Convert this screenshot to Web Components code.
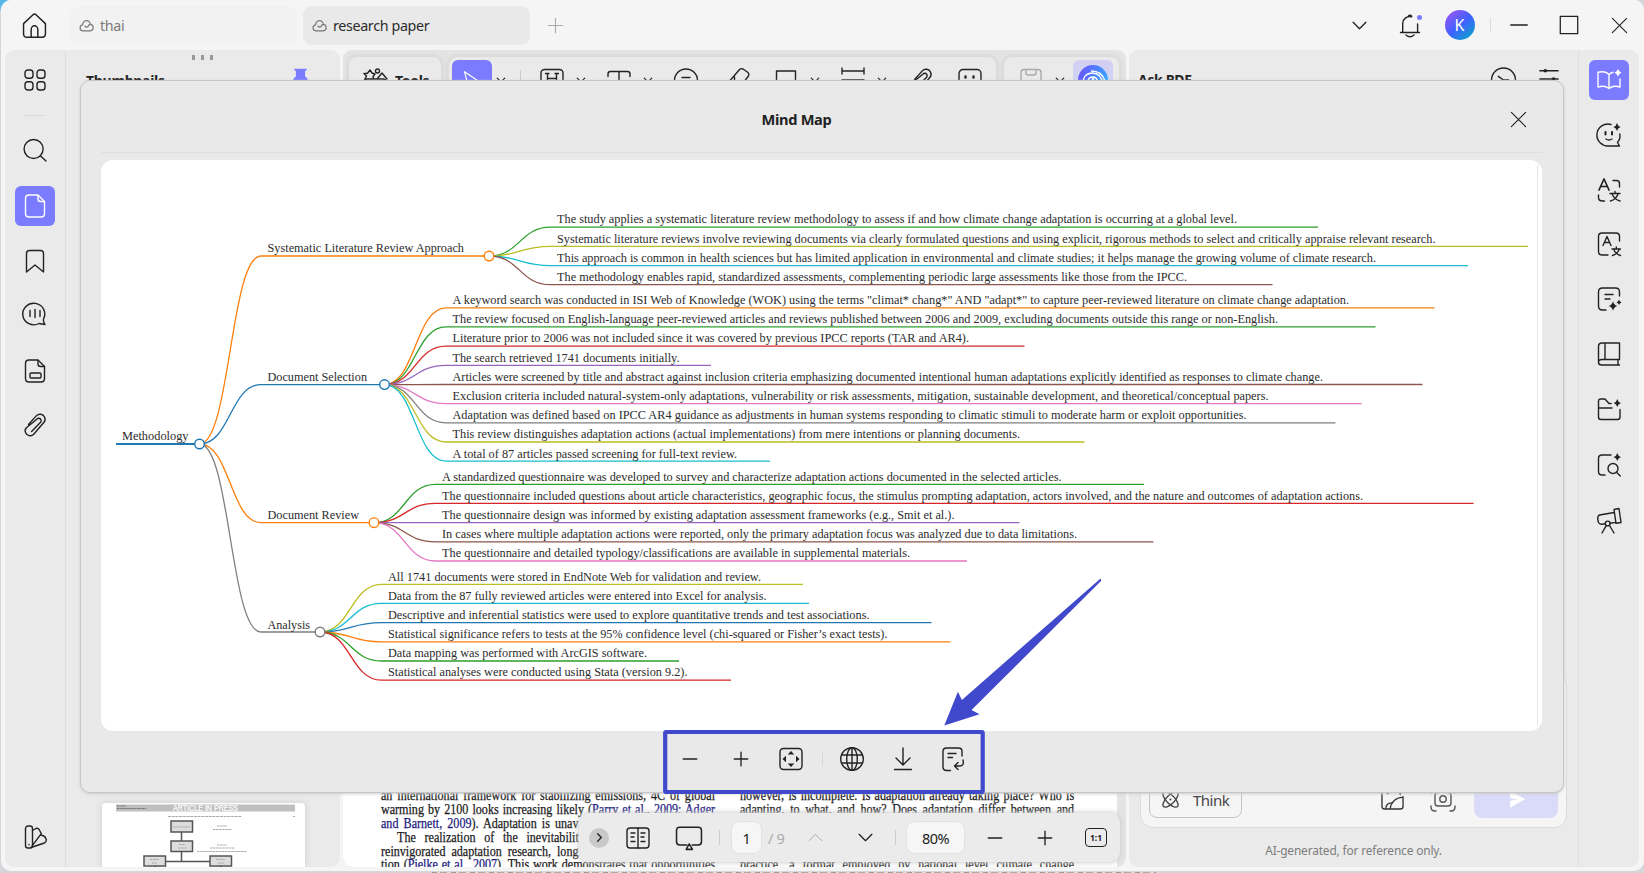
<!DOCTYPE html>
<html lang="en">
<head>
<meta charset="utf-8">
<title>research paper</title>
<style>
  html, body { margin: 0; height: 100%; overflow: hidden; }
  body {
    background: linear-gradient(135deg, #55b8e6 0 5px, #d6d7db 9px);
    font-family: "Noto Sans", "Open Sans", sans-serif;
    font-size: 14px;
    color: #222;
  }
</style>
</head>
<body>
<pdf-app></pdf-app>

<script>
const ICONS = {
  home: '<path d="M1.5 10.2 10.6 1.6q1.4-1.2 2.8 0l9.1 8.6V20q0 3.3-3.3 3.3H4.8q-3.3 0-3.3-3.3z"/><path d="M8.8 23v-7a3.2 3.7 0 0 1 6.4 0v7"/>',
  cloud: '<path d="M6 20.5a4.8 4.8 0 0 1-.3-9.5 6.3 6.3 0 1 1 12.6-.8 5.2 5.2 0 0 1-.3 10.3z"/><path d="M9.5 13a3 3 0 0 0 5.3 0q1.2-2.600 3.500-2.800"/>',
  plus: '<path d="M12 3v18M3 12h18"/>',
  minus: '<path d="M3 12h18"/>',
  down: '<path d="m3 7.500 9 9 9-9"/>',
  up: '<path d="m3 16.500 9-9 9 9"/>',
  right: '<path d="m8 4 8 8-8 8"/>',
  bell: '<path d="M2.500 19.500h19M4.700 19V10.500a7.200 7.200 0 0 1 9-6.800M19.600 11v8M10.500 3a1.800 1.800 0 0 1 3 0M8 22q4 3.400 8 0"/>',
  max: '<path d="M2.500 2.500h19v19h-19z"/>',
  close: '<path d="m3 3 18 18M21 3 3 21"/>',
  grid: '<rect x="2" y="2" width="8" height="8.300" rx="2.800"/><rect x="14" y="2" width="8" height="8.300" rx="2.800"/><rect x="2" y="13.700" width="8" height="8.300" rx="2.800"/><rect x="14" y="13.700" width="8" height="8.300" rx="2.800"/>',
  search: '<circle cx="10.600" cy="11" r="9.500"/><path d="m17.500 18 5.500 5"/>',
  file: '<path d="M6 1h9l6.500 6.500V19.500q0 3.500-3.500 3.500H6q-3.500 0-3.500-3.500v-15Q2.500 1 6 1z"/><path d="M15 1.500V5q0 2.500 2.500 2.500h4"/>',
  bookmark: '<path d="M3.500 23V4.500q0-3 3-3h11q3 0 3 3V23L12 16z"/>',
  comment: '<path d="M20.500 17A11 10.800 0 1 0 16 21.500l6 1-1.500-3z"/><path d="M7 8.500v6M12 7.500v8M17 8.500v6"/>',
  field: '<path d="M6 1h9l6.500 6.500V19.500q0 3.500-3.500 3.500H6q-3.500 0-3.500-3.500v-15Q2.500 1 6 1z"/><path d="M15 1.500V5q0 2.500 2.500 2.500h4"/><rect x="7" y="14" width="11" height="5" rx="1"/>',
  clip: '<path d="M5.500 11.500 13.300 2.900a5 5 0 0 1 8.300 1.300 5 5 0 0 1-.8 5.300L10.700 21.300a5 5 0 0 1-8.200-1.800 4.500 4.500 0 0 1 .9-4.800L13.800 6.300a2.500 2.500 0 0 1 4 0 2.500 2.500 0 0 1-.2 2.900L8.600 18.500"/>',
  palette: '<rect x="2.500" y="1" width="7" height="22" rx="2.500"/><path d="M9.500 5.500 13 3.500q2-.8 3.300 1.200l2 4-9 12"/><path d="m18 10 2.800 1q1.800.8 2.500 3.700 0 2.500-2 3.300L8 22.500M6 19.500v.3"/>',
  aibook: '<path d="M12 6.500Q8.500 2.800 1 4.200V19q7-2 11 1.500 4-3.500 11-1.500v-8M12 6.500V20M12 6.500q1.500-1.800 4-2.300"/><path class="f" d="M21 .8q.6 3 3.500 4-2.900 1-3.500 4-.6-3-3.500-4 2.900-1 3.500-4z"/>',
  aichat: '<path d="M14 1.500A11 11 0 1 0 12 23h10.500l-2-3.500a10 10 0 0 0 2.300-8.500"/><path d="M8.500 9v2.500M15 9v2.500" stroke-width="2"/><path d="M9 16q3 2 6 0"/><path class="f" d="M20 0q.7 3.200 3.600 4-2.900.8-3.600 4-.7-3.200-3.600-4 2.900-.8 3.600-4z"/>',
  translate: '<path d="M2 12 7 1l5 11M3.800 8.500h6.400" stroke-width="1.700"/><path d="M16 2.500h3.500q3 0 3 3V9M1.500 17v2.500q0 3.500 4 3.500h2M13 15.500h10M18 13.500v2M21 16q-2 5.500-7.500 7M15 16q2.500 5.500 8 7"/>',
  translate2: '<path d="M22.500 9V4.500Q22.500 1 19 1H5Q1.500 1 1.500 4.500v15Q1.500 23 5 23h6"/><path d="m6 13.500 4-9 4 9M7.500 10.500h5.200M15 17h8.500M19.300 15v2M22.200 17.500q-2 4.500-6.700 6M16.700 17.500q2 4.500 6.800 6"/>',
  ainote: '<path d="M22.500 9V5q0-4-4-4h-13q-4 0-4 4v14q0 4 4 4H9M8 7.500h8M8 12h5"/><path class="f" d="M16 14q.8 4.200 4.500 5-3.700.8-4.500 5-.8-4.200-4.500-5 3.700-.8 4.500-5zM22 12.500q.5 2 2.500 3-2 .5-2.500 2.500-.5-2-2.500-2.500 2-1 2.500-3z"/>',
  book: '<path d="M5 1h17.500v16.500H5q-3.500 0-3.500 3Q1.500 23 5 23h17.500M1.500 20V4.500Q1.500 1 5 1M8 1v16.500M21 17.500V23"/>',
  aifolder: '<path d="M1.500 11V4.500Q1.500 2 4 2h4l4 4.500h2M1.500 11v9q0 2.500 2.500 2.500h16.500Q23 22.500 23 20V12.500M1.500 11H15"/><path class="f" d="M20.300 2q.7 3.200 3.700 4-3 .8-3.700 4-.7-3.200-3.700-4 3-.8 3.700-4z"/>',
  aisearch: '<path d="M14 2H5Q1.500 2 1.500 5.500v13Q1.500 22 5 22h3"/><circle cx="16" cy="15.500" r="5"/><path d="m19.700 19.500 3.600 3.500"/><path class="f" d="M20.300 0q.7 3.200 3.700 4-3 .8-3.700 4-.7-3.200-3.700-4 3-.8 3.700-4z"/>',
  telescope: '<path d="m17 1.500 5-1 2 14-5 .8zM17.200 4.500 2.500 7Q.5 8 .700 11l.8 3.500q1 2 3.500 1.700l3.200-.5M13.300 15.200l5.200-.8M9.200 17.700 5 25M12.500 17.500l4.500 7.500"/><circle cx="10.700" cy="15.500" r="2.400"/>',
  tools: '<path d="M1 14q0-3 3-3h16q3 0 3 3v9H1zM2 11l1.500-3L1 5.500l3.500-.3L7 2l2 3 3 1-2 2.500.5 2M14 11l5-6 5 6"/><circle cx="14.500" cy="3" r="2"/>',
  cursor: '<path d="m3 2 5 19 4-6.500 8-1z"/>',
  highlight: '<rect x="1" y="1.500" width="22" height="21" rx="3.500"/><path d="M5.500 5.500h3.500M7.500 6v12M15 5.500h3.500M16.500 6v12M7.500 10.500h9"/>',
  text: '<path d="M1 8.500V6q0-2.500 2.500-2.500h17q2.500 0 2.500 2.500v2.500M12 3.500V22"/>',
  strike: '<circle cx="12" cy="12.500" r="11.500"/><path d="M8 9.500h8"/>',
  pen: '<path d="M8 8 13.500 1.500q1.500-1.500 3.500-.5l5 3.500q1.500 1.500.5 3.500L17 15l-5 5M8 8 3.500 13l1 6 8 1M3.500 13h4q2-2 .5-5"/>',
  rect: '<path d="M2.500 3h19v19h-19z"/>',
  measure: '<path d="M1 0v6M23 0v6M1 3h22M1 12h22v9H1zM5 12v3M9 12v3M13 12v3M17 12v3"/>',
  sticker: '<rect x="1" y="1.500" width="22" height="21" rx="4"/><path d="M7.500 8.500v1M15.500 8.500v1" stroke-width="2.400"/>',
  save: '<path d="M5 1.500h14q3 0 3 3V20q0 2.500-2.500 2.500h-15Q2 22.500 2 20V4.500q0-3 3-3zM7 2v3q0 2 2 2h6q2 0 2-2V2M9 14q3-3 6 0"/>',
  clock: '<circle cx="12" cy="12.500" r="11.500"/><path d="m7 9 5 3.500h5"/>',
  sliders: '<path d="M2 3h20M2 12h20M2 21h20"/><circle class="f" cx="8" cy="3" r="2"/><circle class="f" cx="17" cy="12" r="2"/>',
  fit: '<rect x="1" y="1.500" width="22" height="21" rx="3.500"/><path class="f" d="m12 4 3.300 3.500H8.700zM12 20l3.300-3.500H8.700zM3.500 12 7 8.700v6.600zM20.500 12 17 8.700v6.600z"/>',
  globe: '<circle cx="12" cy="12" r="11.300"/><ellipse cx="12" cy="12" rx="5.300" ry="11.300"/><path d="M12 .7v22.600M2 8h20M2 16h20"/>',
  download: '<path d="M12 1v16.500M5 11l7 7 7-7M3.500 22.500h17"/>',
  export: '<path d="M21 9V4.500q0-3.500-3.500-3.500h-12Q2 1 2 4.500v15Q2 23.500 5.500 23.500h4M7 6.500h8M7 10.500h4.500M22 13q1.500 6-3.500 6h-5M17 15.500 13.500 19l3.500 3.500"/>',
  twopage: '<rect x="1" y="2" width="22" height="20" rx="3"/><path d="M12 2v20M5 7h4M5 11h3M5 15.500h4M15 7h4M15 11h3M15 15.500h4"/>',
  present: '<path d="M10 18.500H3.500Q.5 18.500 .5 15.500V5q0-3 3-3h17q3 0 3 3v10.500q0 3-3 3H15"/><path d="m12.200 17.500 3 5H9.400z"/>',
  atom: '<ellipse cx="12" cy="12" rx="5.200" ry="12.500" transform="rotate(45 12 12)"/><ellipse cx="12" cy="12" rx="5.200" ry="12.500" transform="rotate(-45 12 12)"/><circle class="f" cx="12" cy="12" r="1.300"/>',
  image: '<path d="M14 1H4Q1 1 1 4v16q0 3 3 3h16q3 0 3-3V10M9.500 23Q11 11.500 23 10.500M5 23q0-6.500 6-6.500"/><circle class="f" cx="7" cy="6.500" r="1.200"/><path class="f" d="M20 1q.7 3.400 3.700 4-3 .7-3.700 4-.7-3.300-3.700-4 3-.6 3.700-4z"/>',
  camera: '<path d="M0 6V4q0-4 4-4M20 0q4 0 4 4v2M0 19v1q0 4 4 4h1M24 19v1q0 4-4 4h-1M7 5.500h1.500l1-1.500h5l1 1.500H17q3 0 3 3V16q0 3-3 3H7q-3 0-3-3V8.500q0-3 3-3z"/><circle cx="12" cy="12" r="3.200"/>',
  send: '<path class="f" d="M4 1.500 23 11.500 4 22.500V13.500l9-1.500-9-1.500z"/>',
  pin: '<path class="f" d="M3.500 1h17v3h-2v8q4 2 4 6h-21q0-4 4-6V4h-2z"/>'
};

class BaseElement extends HTMLElement {
  connectedCallback() {
    this.attachShadow({ mode: 'open' }).innerHTML = this.render();
  }
}

class UiIcon extends BaseElement {
  render() {
    const size = this.getAttribute('size') || 24;
    const weight = this.getAttribute('weight') || 1.4;
    return `
      <style>
        :host { display: block; flex: none; width: ${size}px; height: ${size}px; }
        svg { display: block; width: 100%; height: 100%; overflow: visible; fill: none; stroke: currentColor; stroke-width: ${weight}; stroke-linecap: round; stroke-linejoin: round; }
        .f { fill: currentColor; stroke: none; }
      </style>
      <svg viewBox="0 0 24 24">${ICONS[this.getAttribute('name')]}</svg>
    `;
  }
}

class DocTab extends BaseElement {
  render() {
    return `
      <style>
        :host { display: flex; align-items: center; gap: 6px; width: 218px; height: 39px; padding-left: 9px; border-radius: 9px; background: #f2f2f2; color: #7a7a7a; font-size: 14.3px; letter-spacing: -.35px; }
        :host([active]) { background: #e9e9e9; color: #2c2c2c; }
        ui-icon { color: #777; }
      </style>
      <ui-icon name="cloud" size="15" weight="1.900"></ui-icon><span><slot></slot></span>
    `;
  }
}

class TitleBar extends BaseElement {
  render() {
    return `
      <style>
        :host { display: flex; align-items: center; height: 50px; box-sizing: border-box; padding-left: 21px; background: #f5f5f5; }
        .spacer { flex: 1; }
        .bell { position: relative; margin-left: 30px; }
        .bell i { position: absolute; right: 0; top: 2px; width: 5px; height: 5px; border-radius: 50%; background: #7b7bff; }
        .avatar { width: 30px; height: 30px; margin: 0 15px 0 23px; border-radius: 50%; background: linear-gradient(140deg, #9b58f5 8%, #4061ff 50%, #08a8c6 95%); color: #fff; display: flex; align-items: center; justify-content: center; font-size: 16px; }
        .sep { width: 1px; height: 15px; background: #ddd; }
      </style>
      <ui-icon name="home" size="25"></ui-icon>
      <doc-tab style="margin-left:23px">thai</doc-tab>
      <doc-tab active style="margin-left:6px">research paper</doc-tab>
      <ui-icon name="plus" size="19" style="margin-left:16px;color:#aaa"></ui-icon>
      <span class="spacer"></span>
      <ui-icon name="down" size="17" weight="1.900"></ui-icon>
      <span class="bell"><ui-icon name="bell" size="24"></ui-icon><i></i></span>
      <span class="avatar">K</span>
      <span class="sep"></span>
      <ui-icon name="minus" size="22" style="margin-left:17px"></ui-icon>
      <ui-icon name="max" size="22" style="margin-left:28px"></ui-icon>
      <ui-icon name="close" size="19" style="margin:0 15.500px 0 30px"></ui-icon>
    `;
  }
}

/* Vertical strip of icon buttons; "items" is a list of name:gap pairs, the gap being the space above. */
class SideRail extends BaseElement {
  render() {
    const active = this.getAttribute('active');
    const items = this.getAttribute('items').split(' ').map(item => {
      const [name, gap] = item.split(':');
      if (name === 'sep') return `<span class="sep" style="margin-top:${gap}px"></span>`;
      return `<span class="btn${name === active ? ' active' : ''}" style="margin-top:${gap === 'auto' ? 'auto' : gap + 'px'}"><ui-icon name="${name}" size="24"></ui-icon></span>`;
    }).join('');
    return `
      <style>
        :host { display: flex; flex-direction: column; align-items: center; width: 60px; flex: none; padding-bottom: 10px; box-sizing: border-box; }
        .btn { width: 40px; height: 40px; flex: none; display: flex; align-items: center; justify-content: center; border-radius: 6px; }
        .active { background: #7b7bff; color: #fff; }
        .sep { width: 22px; height: 1px; flex: none; background: #dadada; }
      </style>
      ${items}
    `;
  }
}

class ThumbPanel extends BaseElement {
  render() {
    return `
      <style>
        :host { display: flex; flex-direction: column; flex: 1; border-left: 1px solid #dedede; }
        .dots { display: flex; justify-content: center; gap: 6px; padding: 5px 2px 0 0; }
        .dots i { width: 3px; height: 5px; background: #999; }
        header { display: flex; justify-content: space-between; padding: 8px 31px 0 20px; font-size: 14px; font-weight: 700; line-height: 25px; letter-spacing: -.3px; }
        header ui-icon { color: #7b7bff; }
        .thumb { width: 203px; height: 64px; margin: auto 0 0 36px; background: #fff; border-radius: 4px 4px 0 0; box-shadow: 0 0 6px #ccc; }
        svg { display: block; }
      </style>
      <div class="dots"><i></i><i></i><i></i></div>
      <header><span>Thumbnails</span><ui-icon name="pin" size="17"></ui-icon></header>
      <div class="thumb">
        <svg width="203" height="64" viewBox="102 803 203 64">
          <rect x="116" y="804.500" width="179" height="7" fill="#bfbfbf"/>
          <text x="173" y="811" font-family="Liberation Sans" font-size="8.500" fill="#fff" stroke="#fff" stroke-width=".2" textLength="65" lengthAdjust="spacingAndGlyphs">ARTICLE IN PRESS</text>
          <path d="M117 806h9M117 808.500h29" stroke="#777" stroke-dasharray="2 .5"/>
          <path d="M168 816.500h74M293 816.500h2" stroke="#aaa" stroke-dasharray="3 .7"/>
          <g stroke="#555" stroke-width="1.500" fill="#ddd"><path d="M181.500 832v9M181.500 852v9M155 861.500h65M155 861v6M221 861v6"/>
          <rect x="171" y="821" width="21.500" height="11"/><rect x="171" y="841" width="21.500" height="10.500"/><rect x="144" y="856" width="21.500" height="10"/><rect x="210" y="856" width="21.500" height="10"/></g>
          <g stroke="#aaa" stroke-dasharray="2.500 .6"><path d="M173 827h17M179 844.500h6M178 848h9M150 859.500h9M152 863h5M216 859.500h9M218 863h6M217 826h10M213 829.500h19M217 845h10M210 848h25M197 851.500h50"/></g>
        </svg>
      </div>
    `;
  }
}

class ToolStrip extends BaseElement {
  render() {
    return `
      <style>
        :host { display: flex; gap: 6px; padding: 6px 6px 0 5px; background: #e4e4e4; border-radius: 9px 9px 0 0; height: 54px; box-sizing: border-box; flex: none; }
        .group { display: flex; align-items: center; box-sizing: border-box; height: 48px; background: #eaeaea; border: 1px solid #dcdcdc; border-radius: 9px; box-shadow: 0 0 5px #d0d0d0; }
        b { margin-left: 8px; font-size: 14px; line-height: 20px; padding-top: 2px; letter-spacing: -.3px; }
        .sel, .ai { width: 40px; height: 40px; border-radius: 6px; background: #7b7bff; color: #fff; display: flex; align-items: center; justify-content: center; }
        .ai { background: linear-gradient(#d4cef3, #c9def3); }
        .ai span { width: 30px; height: 30px; border-radius: 50%; background: linear-gradient(110deg, #655dff 15%, #35a7ff 85%); }
        .sep { width: 1px; height: 20px; background: #ccc; }
      </style>
      <div class="group" style="width:94px">
        <ui-icon name="tools" size="24" style="margin-left:14px"></ui-icon><b>Tools</b>
      </div>
      <div class="group" style="width:550px">
        <span class="sel" style="margin-left:3px"><ui-icon name="cursor" size="20"></ui-icon></span>
        <ui-icon name="down" size="10" weight="3" style="margin-left:4px"></ui-icon>
        <span class="sep" style="margin-left:14px"></span>
        <ui-icon name="highlight" style="margin-left:19px"></ui-icon>
        <ui-icon name="down" size="10" weight="3" style="margin-left:12px"></ui-icon>
        <ui-icon name="text" style="margin-left:21px"></ui-icon>
        <ui-icon name="down" size="10" weight="3" style="margin-left:12px"></ui-icon>
        <ui-icon name="strike" style="margin-left:21px"></ui-icon>
        <ui-icon name="pen" style="margin-left:28px"></ui-icon>
        <ui-icon name="rect" style="margin-left:24px"></ui-icon>
        <ui-icon name="down" size="10" weight="3" style="margin-left:12px"></ui-icon>
        <ui-icon name="measure" style="margin-left:21px"></ui-icon>
        <ui-icon name="down" size="10" weight="3" style="margin-left:12px"></ui-icon>
        <ui-icon name="clip" style="margin-left:22px"></ui-icon>
        <ui-icon name="sticker" style="margin-left:25px"></ui-icon>
      </div>
      <div class="group" style="width:117px">
        <ui-icon name="save" style="margin-left:15px;color:#aaa"></ui-icon>
        <ui-icon name="down" size="10" weight="3" style="margin-left:12px"></ui-icon>
        <span class="ai" style="margin-left:8px"><span>
          <svg width="30" height="30" viewBox="0 0 30 30" fill="none" stroke="#fff" stroke-width="1.300"><path d="M6 22Q3 9 14 8q9 0 11 11M10 23Q8 12 15 12q6 0 5 12M13 6q11 0 14 10"/><path d="m15 13 1 3 3 1-3 1-1 3-1-3-3-1 3-1z" fill="#fff"/></svg>
        </span></span>
      </div>
    `;
  }
}

class DocPage extends BaseElement {
  render() {
    return `
      <style>
        :host { display: flex; align-items: flex-end; gap: 24px; flex: 1; background: #fff; margin-right: 9px; padding: 0 0 0 38px; overflow: hidden; border-radius: 0 0 0 9px; }
        .col { width: 335px; height: 78px; font: 13.900px/14px "Liberation Serif", serif; color: #1c1c1c; -webkit-text-stroke: .25px currentColor; }
        p { margin: 0; width: 384px; transform: scaleX(.87); transform-origin: 0 0; white-space: nowrap; text-align: justify; text-align-last: justify; height: 13.900px; }
        a { color: #1b1b80; }
      </style>
      <div class="col">
        <p>an international framework for stabilizing emissions, 4C of global</p>
        <p>warming by 2100 looks increasing likely (<a>Parry et al., 2009; Adger</a></p>
        <p style="width:227px"><a>and Barnett, 2009</a>). Adaptation is unav</p>
        <p style="width:209px;margin-left:16px">The realization of the inevitabilit</p>
        <p style="width:227px">reinvigorated adaptation research, long</p>
        <p>tion (<a>Pielke et al., 2007</a>). This work demonstrates that opportunities</p>
      </div>
      <div class="col">
        <p>however, is incomplete. Is adaptation already taking place? Who is</p>
        <p style="margin-bottom:41.700px">adapting, to what, and how? Does adaptation differ between and</p>
        <p>practice, a format employed by national level climate change</p>
      </div>
    `;
  }
}

class PageBar extends BaseElement {
  render() {
    return `
      <style>
        :host { position: absolute; left: 236px; bottom: 5px; width: 541px; height: 49px; display: flex; align-items: center; background: #ebebeb; border-radius: 10px; box-shadow: 0 0 5px 1px #cfcfcf; }
        .round { width: 20px; height: 20px; margin-left: 10px; border-radius: 50%; background: #c9c9c9; display: flex; align-items: center; justify-content: center; }
        .sep { width: 1px; height: 15px; background: #ccc; }
        .box { height: 33px; box-sizing: border-box; display: flex; align-items: center; justify-content: center; background: #f6f6f6; border: 1px solid #e2e2e2; border-radius: 8px; font-size: 14.500px; letter-spacing: -.5px; }
        .total { width: 17px; margin-left: 6px; color: #aaa; font-size: 14.500px; white-space: nowrap; letter-spacing: -.3px; }
        .ratio { width: 22px; height: 19px; box-sizing: border-box; border: 1.500px solid #222; border-radius: 4px; font-size: 8.500px; font-weight: 700; display: flex; align-items: center; justify-content: center; margin-left: 31px; }
      </style>
      <span class="round"><ui-icon name="right" size="11" weight="3"></ui-icon></span>
      <ui-icon name="twopage" style="margin-left:17px"></ui-icon>
      <ui-icon name="present" size="26" style="margin-left:26px"></ui-icon>
      <span class="sep" style="margin-left:17px"></span>
      <span class="box" style="width:31px;margin-left:11px">1</span>
      <span class="total">/ 9</span>
      <ui-icon name="up" size="17" style="margin-left:21.500px;color:#aaa"></ui-icon>
      <ui-icon name="down" size="17" weight="1.800" style="margin-left:33px"></ui-icon>
      <span class="sep" style="margin-left:21px"></span>
      <span class="box" style="width:59px;margin-left:10.500px">80%</span>
      <ui-icon name="minus" size="18" style="margin-left:21px" weight="1.800"></ui-icon>
      <ui-icon name="plus" size="18" style="margin-left:32px" weight="1.800"></ui-icon>
      <span class="ratio">1:1</span>
    `;
  }
}

class DocViewer extends BaseElement {
  render() {
    return `
      <style>
        :host { display: flex; flex-direction: column; width: 783px; flex: none; position: relative; background: #e4e4e4; border-radius: 9px; overflow: hidden; }
      </style>
      <tool-strip></tool-strip>
      <doc-page></doc-page>
      <page-bar></page-bar>
    `;
  }
}

class AskPanel extends BaseElement {
  render() {
    return `
      <style>
        :host { display: flex; flex-direction: column; flex: 1; border-right: 1px solid #dfdfdf; }
        header { display: flex; align-items: flex-start; height: 45px; padding: 13px 18px 0 9px; font-size: 14px; font-weight: 700; line-height: 33px; letter-spacing: -.3px; }
        header ui-icon:first-of-type { margin: 4px 22px 0 auto; }
        header ui-icon:last-of-type { margin-top: 5px; }
        .card { display: flex; align-items: flex-end; height: 155px; margin: auto 11px 0; box-sizing: border-box; padding: 0 8px 9px; background: #f5f5f5; border: 1px solid #dcdcdc; border-radius: 13px; }
        .think { display: flex; align-items: center; box-sizing: border-box; width: 93px; height: 37px; padding-left: 11px; border: 1px solid #c4c4c4; border-radius: 8px; font-size: 15px; letter-spacing: -.5px; color: #444; gap: 13px; }
        .send { display: flex; align-items: center; justify-content: center; width: 84px; height: 38px; margin-left: 19px; border-radius: 8px; background: #dadbf8; color: #fff; }
        .note { margin: 14px 0 9px; text-align: center; font-size: 11.900px; line-height: 16px; letter-spacing: -.15px; color: #7c7c7c; }
      </style>
      <header>Ask PDF<ui-icon name="clock" size="25"></ui-icon><ui-icon name="sliders" size="22"></ui-icon></header>
      <div class="card">
        <span class="think"><ui-icon name="atom" size="19" weight="1.700"></ui-icon>Think</span>
        <ui-icon name="image" size="23" style="margin:0 0 8px auto;color:#333"></ui-icon>
        <ui-icon name="camera" size="24" style="margin:0 0 7px 27px;color:#555"></ui-icon>
        <span class="send"><ui-icon name="send" size="19"></ui-icon></span>
      </div>
      <div class="note">AI-generated, for reference only.</div>
    `;
  }
}

const COLORS = { blue: '#1f77b4', orange: '#ff7f0e', green: '#2ca02c', red: '#d62728', purple: '#9467bd', brown: '#8c564b', pink: '#e377c2', gray: '#7f7f7f', olive: '#bcbd22', cyan: '#17becf' };

/* Leaves: [colour, text, end of text, end of underline, baseline]; y is the first underline. */
const BRANCHES = [
  { text: 'Systematic Literature Review Approach', end: 464, cx: 489, cy: 256, base: 252, color: 'orange', y: 227.2, leaves: [
    ['green', 'The study applies a systematic literature review methodology to assess if and how climate change adaptation is occurring at a global level.', 1237, 1318, 223],
    ['olive', 'Systematic literature reviews involve reviewing documents via clearly formulated questions and using explicit, rigorous methods to select and critically appraise relevant research.', 1435.5, 1528, 243],
    ['cyan', 'This approach is common in health sciences but has limited application in environmental and climate studies; it helps manage the growing volume of climate research.', 1376, 1468, 262],
    ['brown', 'The methodology enables rapid, standardized assessments, complementing periodic large assessments like those from the IPCC.', 1187, 1272.5, 281]
  ] },
  { text: 'Document Selection', end: 367, cx: 384.5, cy: 384.6, base: 381, color: 'blue', y: 307.8, leaves: [
    ['orange', 'A keyword search was conducted in ISI Web of Knowledge (WOK) using the terms "climat* chang*" AND "adapt*" to capture peer-reviewed literature on climate change adaptation.', 1349, 1434.5, 304],
    ['green', 'The review focused on English-language peer-reviewed articles and reviews published between 2006 and 2009, excluding documents outside this range or non-English.', 1278, 1375.5, 323],
    ['red', 'Literature prior to 2006 was not included since it was covered by previous IPCC reports (TAR and AR4).', 969, 1024.5, 342],
    ['purple', 'The search retrieved 1741 documents initially.', 679.5, 711, 362],
    ['brown', 'Articles were screened by title and abstract against inclusion criteria emphasizing documented intentional human adaptations explicitly identified as responses to climate change.', 1323, 1422.5, 381],
    ['pink', 'Exclusion criteria included natural-system-only adaptations, vulnerability or risk assessments, mitigation, sustainable development, and theoretical/conceptual papers.', 1268.5, 1361.5, 400],
    ['gray', 'Adaptation was defined based on IPCC AR4 guidance as adjustments in human systems responding to climatic stimuli to moderate harm or exploit opportunities.', 1246.5, 1335.5, 419],
    ['olive', 'This review distinguishes adaptation actions (actual implementations) from mere intentions or planning documents.', 1020, 1084.5, 438],
    ['cyan', 'A total of 87 articles passed screening for full-text review.', 737, 770, 458]
  ] },
  { text: 'Document Review', end: 359, cx: 374, cy: 522.7, base: 519, color: 'orange', y: 484.3, leaves: [
    ['green', 'A standardized questionnaire was developed to survey and characterize adaptation actions documented in the selected articles.', 1061.5, 1144, 481],
    ['red', 'The questionnaire included questions about article characteristics, geographic focus, the stimulus prompting adaptation, actors involved, and the nature and outcomes of adaptation actions.', 1363, 1473.5, 500],
    ['purple', 'The questionnaire design was informed by existing adaptation assessment frameworks (e.g., Smit et al.).', 954.5, 1019.5, 519],
    ['brown', 'In cases where multiple adaptation actions were reported, only the primary adaptation focus was analyzed due to data limitations.', 1077, 1153.5, 538],
    ['pink', 'The questionnaire and detailed typology/classifications are available in supplemental materials.', 910, 967, 557]
  ] },
  { text: 'Analysis', end: 310, cx: 320, cy: 632, base: 629, color: 'gray', y: 584.3, leaves: [
    ['olive', 'All 1741 documents were stored in EndNote Web for validation and review.', 761, 803, 581],
    ['cyan', 'Data from the 87 fully reviewed articles were entered into Excel for analysis.', 766.5, 809, 600],
    ['blue', 'Descriptive and inferential statistics were used to explore quantitative trends and test associations.', 869.5, 931.5, 619],
    ['orange', 'Statistical significance refers to tests at the 95% confidence level (chi-squared or Fisher’s exact tests).', 887.5, 950.5, 638],
    ['green', 'Data mapping was performed with ArcGIS software.', 647, 679, 657],
    ['red', 'Statistical analyses were conducted using Stata (version 9.2).', 687.5, 731, 676]
  ] }
];

class MindMap extends BaseElement {
  label(text, x, y, end) {
    return `<text x="${x}" y="${y}" textLength="${end - x}" lengthAdjust="spacingAndGlyphs">${text}</text>`;
  }
  link(x1, y1, x2, y2, end, color) {
    const mid = (x1 + x2) / 2;
    return `<path d="M${x1} ${y1}C${mid} ${y1} ${mid} ${y2} ${x2} ${y2}H${end}" stroke="${COLORS[color]}"/>`;
  }
  node(x, y, color) {
    return `<circle cx="${x}" cy="${y}" r="4.800" stroke="${COLORS[color]}"/>`;
  }
  render() {
    const root = { x: 199.5, y: 444 };
    let links = `<path d="M116 444H${root.x}" stroke="${COLORS.blue}" style="stroke-width:1.900"/>`;
    let nodes = '';
    let labels = this.label('Methodology', 122, 440, 188.5);
    for (const b of BRANCHES) {
      links += this.link(root.x, root.y, 261, b.cy, b.cx, b.color);
      labels += this.label(b.text, 267.5, b.base, b.end);
      b.leaves.forEach(([color, text, end, lineEnd, base], i) => {
        const x = b.cx + 61.5;
        links += this.link(b.cx, b.cy, x, b.y + i * 19.17, lineEnd, color);
        labels += this.label(text, x + 6.5, base, end);
      });
      nodes += this.node(b.cx, b.cy, b.color);
    }
    nodes += this.node(root.x, root.y, 'blue');
    return `
      <style>
        :host { display: block; width: 1441px; height: 571px; background: #fff; border-radius: 12px; }
        svg { display: block; }
        path { fill: none; stroke-width: 1.300; }
        circle { fill: #fff; stroke-width: 1.400; }
        text { font: 13.200px "Liberation Serif", serif; fill: #2c2c2c; }
      </style>
      <svg width="1441" height="571" viewBox="101 160 1441 571">
        <path d="M1537.500 165V726" stroke="#e3e5eb" style="stroke-width:1"/>
        ${links}${nodes}${labels}
      </svg>
    `;
  }
}

class MapDialog extends BaseElement {
  render() {
    return `
      <style>
        :host { position: absolute; left: 80px; top: 80px; width: 1484px; height: 713px; box-sizing: border-box; display: flex; flex-direction: column; padding: 0 20px; background: #e9e9e9; border: 1px solid #c6c6c6; border-radius: 10px; box-shadow: 0 1px 3px #ccc; }
        header { position: relative; display: flex; align-items: center; justify-content: center; height: 72px; padding: 5px 51px 0 0; box-sizing: border-box; border-bottom: 1px solid #dedede; font-size: 14.600px; font-weight: 700; letter-spacing: -.3px; margin-bottom: 7px; flex: none; }
        header ui-icon { position: absolute; right: 15px; top: 29px; }
        footer { display: flex; align-items: center; height: 55px; padding-left: 580px; }
        .sep { width: 1px; height: 15px; background: #d8d8d8; }
      </style>
      <header>Mind Map<ui-icon name="close" size="19"></ui-icon></header>
      <mind-map></mind-map>
      <footer>
        <ui-icon name="minus" size="18" weight="1.800"></ui-icon>
        <ui-icon name="plus" size="18" weight="1.800" style="margin-left:32.500px"></ui-icon>
        <ui-icon name="fit" style="margin-left:29px"></ui-icon>
        <span class="sep" style="margin-left:19px"></span>
        <ui-icon name="globe" style="margin-left:17.500px"></ui-icon>
        <ui-icon name="download" style="margin-left:27px"></ui-icon>
        <ui-icon name="export" style="margin-left:26px"></ui-icon>
      </footer>
    `;
  }
}

class CallOut extends BaseElement {
  render() {
    return `
      <style>
        :host { position: absolute; left: 663px; top: 575px; width: 445px; height: 220px; }
        svg { display: block; fill: #4048cc; }
      </style>
      <svg width="445" height="220" viewBox="663 575 445 220">
        <path d="M1100 579h1v2L971.500 710l8 4.300-35.200 11.200 13.600-33.800 4 8.300z"/>
        <rect x="665.200" y="732" width="317.500" height="60" rx="1" fill="none" stroke="#4048cc" stroke-width="4.200"/>
      </svg>
    `;
  }
}

class PdfApp extends BaseElement {
  render() {
    return `
      <style>
        :host { display: block; position: relative; width: 1644px; height: 873px; }
        .window { display: flex; flex-direction: column; height: 871px; margin-left: 1px; background: #f5f5f5; border-radius: 10px; overflow: hidden; }
        .body { display: flex; gap: 3px; height: 817px; padding: 0 5px 0 4px; }
        .left, .right { display: flex; background: #eaeaea; border-radius: 9px; overflow: hidden; }
        .left { width: 335px; }
        .right { flex: 1; }
        .under { height: 1px; width: 724px; margin: 1px 0 0 432px; background: repeating-linear-gradient(90deg, #999 0 5px, #ddd 5px 8px, #aaa 8px 15px, #ddd 15px 19px); }
      </style>
      <div class="window">
        <title-bar></title-bar>
        <div class="body">
          <div class="left">
            <side-rail active="file" items="grid:10 sep:15 search:14 file:16 bookmark:15 comment:13 field:17 clip:14 palette:auto"></side-rail>
            <thumb-panel></thumb-panel>
          </div>
          <doc-viewer></doc-viewer>
          <div class="right">
            <ask-panel></ask-panel>
            <side-rail active="aibook" items="aibook:10 aichat:15 translate:15 translate2:14 ainote:15 book:15 aifolder:15 aisearch:16 telescope:15"></side-rail>
          </div>
        </div>
      </div>
      <div class="under"></div>
      <map-dialog></map-dialog>
      <call-out></call-out>
    `;
  }
}

customElements.define('ui-icon', UiIcon);
customElements.define('doc-tab', DocTab);
customElements.define('title-bar', TitleBar);
customElements.define('side-rail', SideRail);
customElements.define('thumb-panel', ThumbPanel);
customElements.define('tool-strip', ToolStrip);
customElements.define('doc-page', DocPage);
customElements.define('page-bar', PageBar);
customElements.define('doc-viewer', DocViewer);
customElements.define('ask-panel', AskPanel);
customElements.define('mind-map', MindMap);
customElements.define('map-dialog', MapDialog);
customElements.define('call-out', CallOut);
customElements.define('pdf-app', PdfApp);
</script>
</body>
</html>
